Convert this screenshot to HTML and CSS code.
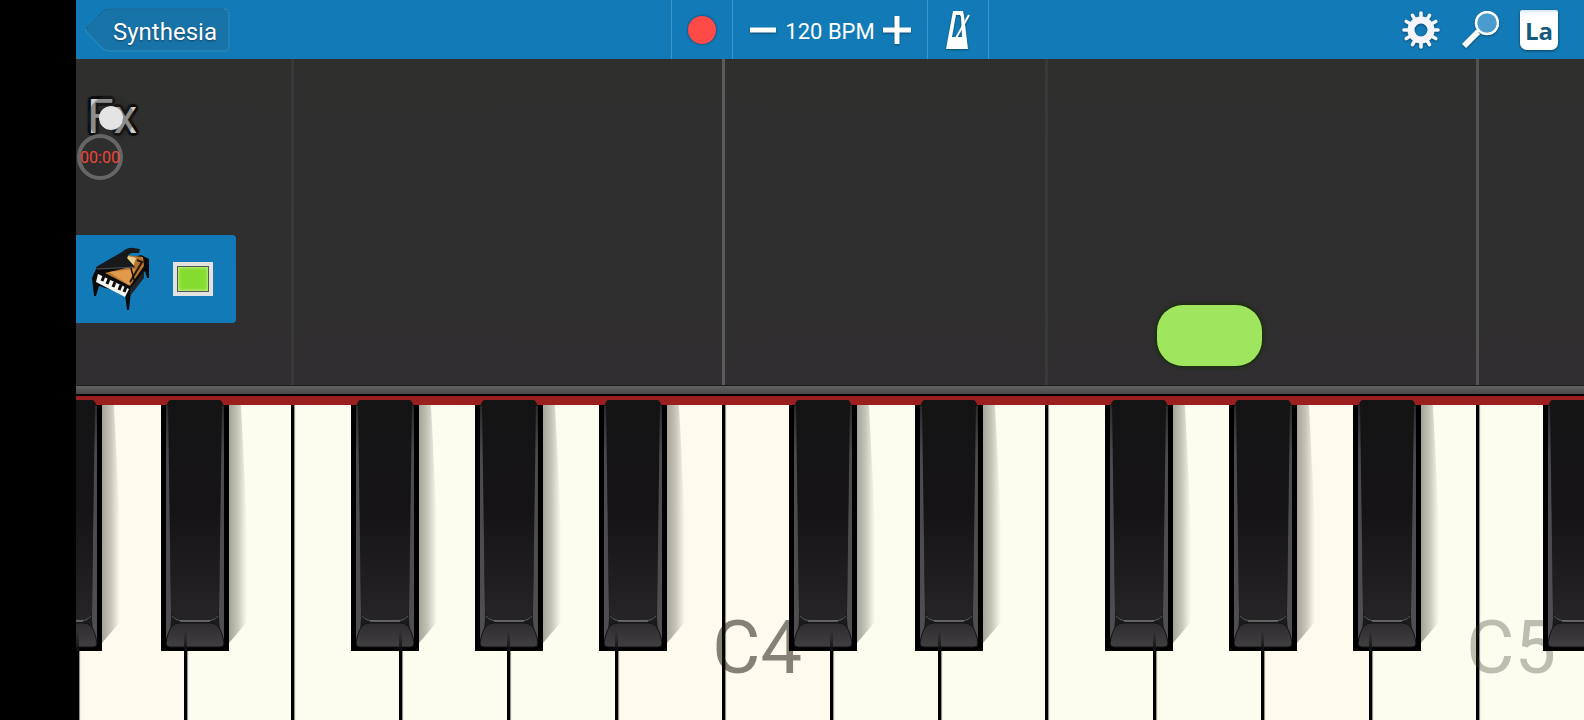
FILE: index.html
```html
<!DOCTYPE html>
<html lang="en">

<head>
    <meta charset="utf-8">
    <title>Synthesia</title>
    <link rel="stylesheet" href="styles.css">
</head>

<body>
    <!-- shared drawing for the black keys -->
    <svg class="defs" aria-hidden="true">
        <defs>
            <linearGradient id="top-fill" x1="0" y1="0" x2="0" y2="1">
                <stop offset="0" stop-color="#151415" />
                <stop offset="0.5" stop-color="#151316" />
                <stop offset="1" stop-color="#262427" />
            </linearGradient>
            <linearGradient id="lip-fill" x1="0" y1="0" x2="0" y2="1">
                <stop offset="0" stop-color="#2e2c2e" />
                <stop offset="1" stop-color="#413f41" />
            </linearGradient>
            <linearGradient id="edge-fill" x1="0" y1="0" x2="0" y2="1">
                <stop offset="0" stop-color="#2b2a2c" />
                <stop offset="0.2" stop-color="#4a494b" />
                <stop offset="1" stop-color="#504e50" />
            </linearGradient>
            <linearGradient id="shade-fill" x1="0" y1="0" x2="1" y2="0">
                <stop offset="0" stop-color="#4a4a40" stop-opacity="0.5" />
                <stop offset="0.5" stop-color="#4a4a40" stop-opacity="0.3" />
                <stop offset="1" stop-color="#4a4a40" stop-opacity="0" />
            </linearGradient>
            <symbol id="black-key" viewBox="0 0 88 251">
                <path d="M68 5h12l6 120v97L68 243z" fill="url(#shade-fill)" />
                <path d="M0 5h68v246H0z" fill="#000" />
                <path d="M5 6l2-4q1-2 3-2h48q2 0 3 2l2 4v237q0 4-4 4H9q-4 0-4-4z" fill="#1b1a1c" />
                <path d="M5 6h3l2 212-1 14-4 8z" fill="url(#edge-fill)" />
                <path d="M60 6h3v234l-4-8-1-14z" fill="url(#edge-fill)" />
                <path d="M7 3q1-3 3-3h48q2 0 3 3l-3 208q-3 10-12 10H22q-9 0-12-10z" fill="url(#top-fill)" />
                <path d="M11 216q4 5 12 5h22q8 0 12-5" fill="none" stroke="#5a595a" />
                <path d="M19 221h30" stroke="#8a898a" />
                <path d="M5 243q2-12 6-17 3-3 8-3h30q5 0 8 3 4 5 6 17 0 4-4 4H9q-4 0-4-4z" fill="url(#lip-fill)" stroke="#131213" />
            </symbol>
        </defs>
    </svg>

    <div class="app">
        <header class="toolbar">
            <div class="left">
                <button class="back">
                    <svg width="146" height="44" viewBox="0 0 146 44">
                        <path d="M1 22L18 4q3-3 7-3h115q5 0 5 5v32q0 5-5 5H25q-4 0-7-3z" fill="#1873a8" stroke="#2f8ec2" />
                        <path d="M2 21L18 4q3-3 7-3h115" fill="none" stroke="#125f8d" />
                    </svg>
                    <span>Synthesia</span>
                </button>
            </div>
            <div class="transport">
                <button class="cell record" aria-label="Record"><i></i></button>
                <div class="cell tempo">
                    <button aria-label="Slower">
                        <svg width="28" height="28"><path d="M1 14h26" stroke="#fff" stroke-width="5" /></svg>
                    </button>
                    <span>120 BPM</span>
                    <button aria-label="Faster">
                        <svg width="28" height="28"><path d="M0 14h28M14 0v28" stroke="#fff" stroke-width="5" /></svg>
                    </button>
                </div>
                <button class="cell metronome" aria-label="Metronome">
                    <svg width="26" height="40" viewBox="0 0 26 40">
                        <path fill-rule="evenodd" d="M8 1h10l1 5 4 33H1zM11 5L7 27h10l-1-20-1-2z" fill="#fff" />
                        <path d="M24 5L11 28" stroke="#fff" stroke-width="2" />
                    </svg>
                </button>
            </div>
            <div class="tools">
                <button aria-label="Settings">
                    <svg width="38" height="38" viewBox="-19 -19 38 38">
                        <circle r="10" fill="none" stroke="#f4f6fb" stroke-width="7" />
                        <g stroke="#f4f6fb" stroke-width="3.6" stroke-linecap="round">
                            <path id="tooth" d="M0-12v-5M0 12v5" />
                            <use href="#tooth" transform="rotate(30)" />
                            <use href="#tooth" transform="rotate(60)" />
                            <use href="#tooth" transform="rotate(90)" />
                            <use href="#tooth" transform="rotate(120)" />
                            <use href="#tooth" transform="rotate(150)" />
                        </g>
                    </svg>
                </button>
                <button aria-label="Zoom">
                    <svg width="38" height="38" viewBox="0 0 38 38">
                        <path d="M3 35l14-14" stroke="#fff" stroke-width="6" />
                        <path d="M15 22l4-5" stroke="#fff" stroke-width="3" />
                        <circle cx="26" cy="12" r="11" fill="#4a9bce" stroke="#fff" stroke-width="2.5" />
                    </svg>
                </button>
                <button class="labels" aria-label="Note labels">La</button>
            </div>
        </header>

        <main class="stage">
            <div class="guides">
                <i class="f3"></i>
                <i class="c4"></i>
                <i class="f4"></i>
                <i class="c5"></i>
            </div>
            <button class="fx">Fx</button>
            <div class="track">
                <button aria-label="Instrument">
                    <svg width="60" height="64" viewBox="0 0 60 64">
                        <path d="M50 8l8 4v19h-2l-2-7-14 20-2 19h-2l-2-16L8 39 5 49H3L1 31l4-9z" fill="#0a0a0b" />
                        <path d="M34 8l18 2 1 9-14 20-25-13 25-6z" fill="#b9762e" />
                        <path d="M37 9l8 2-3 9-8-1z" fill="#e9cf92" />
                        <path d="M18 25l26-3-6 16z" fill="#df9a4c" />
                        <path d="M46 13l5 2-12 20" fill="none" stroke="#2a1708" stroke-width="2" />
                        <path d="M5 20L31 5q6-5 11-4l7 1-1 4-7 0q-4 1-5 5l8 9-38 3z" fill="#18191b" />
                        <path d="M6 22l38-2" stroke="#4c4e52" />
                        <path d="M7 27l31 15-4 8L5 35z" fill="#f5f5f2" />
                        <path d="M13 29l-2 5M18 32l-2 5M24 35l-2 5M30 38l-2 5M35 40l-2 5" stroke="#0a0a0b" stroke-width="3" />
                        <path d="M40 21l4 15" stroke="#0a0a0b" stroke-width="1.5" />
                        <path d="M39 42l14-18v7L39 49z" fill="#222326" />
                    </svg>
                </button>
                <button class="swatch" aria-label="Track colour"><i></i></button>
            </div>
            <i class="note"></i>
        </main>

        <div class="rail"></div>
        <div class="felt"></div>

        <div class="keyboard">
            <div class="key warm split">
                <button class="white" aria-label="D3"></button>
                <button class="black cs cut" aria-label="C#3"><svg><use href="#black-key" /></svg></button>
                <button class="black ds" aria-label="D#3"><svg><use href="#black-key" /></svg></button>
            </div>
            <div class="key split">
                <button class="white" aria-label="E3"></button>
            </div>
            <div class="key">
                <button class="white" aria-label="F3"></button>
                <button class="black fs" aria-label="F#3"><svg><use href="#black-key" /></svg></button>
            </div>
            <div class="key split">
                <button class="white" aria-label="G3"></button>
                <button class="black gs" aria-label="G#3"><svg><use href="#black-key" /></svg></button>
            </div>
            <div class="key split">
                <button class="white" aria-label="A3"></button>
                <button class="black as" aria-label="A#3"><svg><use href="#black-key" /></svg></button>
            </div>
            <div class="key warm split">
                <button class="white" aria-label="B3"></button>
            </div>
            <div class="key warm">
                <button class="white" aria-label="C4"></button>
                <span class="name middle">C4</span>
                <button class="black cs" aria-label="C#4"><svg><use href="#black-key" /></svg></button>
            </div>
            <div class="key split">
                <button class="white" aria-label="D4"></button>
                <button class="black ds" aria-label="D#4"><svg><use href="#black-key" /></svg></button>
            </div>
            <div class="key split">
                <button class="white" aria-label="E4"></button>
            </div>
            <div class="key">
                <button class="white" aria-label="F4"></button>
                <button class="black fs" aria-label="F#4"><svg><use href="#black-key" /></svg></button>
            </div>
            <div class="key split">
                <button class="white" aria-label="G4"></button>
                <button class="black gs" aria-label="G#4"><svg><use href="#black-key" /></svg></button>
            </div>
            <div class="key warm split">
                <button class="white" aria-label="A4"></button>
                <button class="black as" aria-label="A#4"><svg><use href="#black-key" /></svg></button>
            </div>
            <div class="key split">
                <button class="white" aria-label="B4"></button>
            </div>
            <div class="key">
                <button class="white" aria-label="C5"></button>
                <span class="name">C5</span>
                <button class="black cs" aria-label="C#5"><svg><use href="#black-key" /></svg></button>
            </div>
        </div>

        <!-- floating screen recorder -->
        <div class="bubble"></div>
        <div class="timer">00:00</div>
    </div>
</body>

</html>
```
FILE: styles.css
```css
:root {
    --bar: #127bb7;
    --stage: #302e30;
    --ivory: #fcfdee;
    --ivory-warm: #fffaee;
    --felt: #9c1f20;
    --note: #9fe65e;
}

* {
    margin: 0;
    padding: 0;
    box-sizing: border-box;
}

body {
    font-family: Roboto, "Liberation Sans", sans-serif;
    background: #000;
    padding-left: 76px;
    color: #fff;
}

button {
    background: none;
    border: none;
    color: inherit;
    font-family: inherit;
    cursor: pointer;
}

svg {
    display: block;
}

.defs {
    position: absolute;
    width: 0;
    height: 0;
}

.app {
    position: relative;
    min-height: 100vh;
    display: flex;
    flex-direction: column;
    overflow: hidden;
}

/* toolbar */
.toolbar {
    display: grid;
    grid-template-columns: 1fr auto 1fr;
    height: 59px;
    background: var(--bar);
}

.left {
    display: flex;
    align-items: center;
    padding-left: 8px;
}

.back {
    display: grid;
    align-items: center;
    font-size: 24px;
    text-shadow: 0 1px 2px rgba(0, 0, 0, 0.4);
}

.back svg,
.back span {
    grid-area: 1 / 1;
}

.back span {
    padding: 4px 0 0 29px;
    text-align: left;
}

.transport {
    display: flex;
    border-right: 1px solid #3d97c9;
}

.cell {
    display: flex;
    align-items: center;
    justify-content: center;
    width: 61px;
    border-left: 1px solid #3d97c9;
}

.record i {
    width: 28px;
    height: 28px;
    border-radius: 50%;
    background: #ff4a48;
    box-shadow: 0 0 3px rgba(0, 0, 0, 0.5);
}

.tempo {
    width: 195px;
    gap: 8px;
    font-size: 22px;
}

.tempo span {
    padding-top: 4px;
    white-space: nowrap;
}

.tempo svg,
.metronome svg,
.tools svg {
    filter: drop-shadow(0 1px 1px rgba(0, 0, 0, 0.4));
}

.tools {
    display: flex;
    align-items: center;
    justify-content: flex-end;
    gap: 21px;
    padding-right: 26px;
}

.labels {
    width: 38px;
    height: 40px;
    border-radius: 2px 2px 7px 7px;
    background: linear-gradient(#d5e6f1, #fff 4px);
    box-shadow: 0 1px 3px rgba(0, 0, 0, 0.5);
    color: #175b7c;
    font-family: "Open Sans", sans-serif;
    font-size: 24px;
    font-weight: 700;
    line-height: 42px;
}

/* falling notes */
.stage {
    position: relative;
    flex: 1;
    min-height: 326px;
    padding-top: 28px;
    background: linear-gradient(#2f2f2e, var(--stage));
}

.guides {
    position: absolute;
    inset: 0;
    display: grid;
    grid-template-columns: repeat(14, 1fr);
}

.guides i {
    grid-row: 1;
    border-left: 3px solid #3a393a;
}

.f3 {
    grid-column: 3;
}

.guides .c4 {
    grid-column: 7;
    border-color: #5c5b5c;
}

.f4 {
    grid-column: 10;
}

.guides .c5 {
    grid-column: 14;
    border-color: #545354;
}

.fx {
    position: relative;
    display: block;
    margin-left: 11px;
    height: 60px;
    font-size: 48px;
    line-height: 60px;
    color: #d0d0d0;
    text-shadow: 3px 0 1px #0c0c0c, -3px 0 1px #0c0c0c, 0 3px 1px #0c0c0c, 0 -3px 1px #0c0c0c,
        2px 2px 1px #0c0c0c, -2px 2px 1px #0c0c0c, 2px -2px 1px #0c0c0c, -2px -2px 1px #0c0c0c;
}

.track {
    position: relative;
    display: flex;
    align-items: center;
    gap: 22px;
    width: 160px;
    height: 88px;
    margin-top: 88px;
    padding-left: 15px;
    border-radius: 0 4px 4px 0;
    background: var(--bar);
}

.swatch {
    width: 40px;
    height: 34px;
    padding: 4px;
    background: #e2e2e0;
}

.swatch i {
    display: block;
    height: 100%;
    border: 1px solid #555;
    background: #86dc2e;
    box-shadow: inset 0 0 3px 1px #b9ef80;
}

.note {
    position: absolute;
    left: 71.7%;
    bottom: 19px;
    width: 105px;
    height: 61px;
    border-radius: 26px;
    background: var(--note);
    box-shadow: 0 0 3px 2px #1c2e10;
}

.rail {
    height: 11px;
    border-top: 1px solid #1c1c1c;
    border-bottom: 2px solid #000;
    background: linear-gradient(#636263, #4a494a);
}

.felt {
    height: 9px;
    background: var(--felt);
}

/* keyboard */
.keyboard {
    display: grid;
    grid-template-columns: repeat(14, 1fr);
    height: 315px;
}

.key {
    position: relative;
}

.white {
    display: block;
    width: 100%;
    height: 100%;
    border-left: 3px solid #000;
    background: var(--ivory);
    box-shadow: inset 2px 0 1px -1px #8a8a80;
}

.warm .white {
    background: var(--ivory-warm);
}

.black {
    position: absolute;
    z-index: 2;
    top: -5px;
    width: 68px;
    height: 251px;
}

.black svg {
    width: 88px;
    height: 251px;
}

.cs {
    left: 62%;
}

.ds {
    left: 79%;
}

.fs {
    left: 55%;
}

.gs {
    left: 70%;
}

.as {
    left: 86%;
}

.cut {
    left: -39%;
}

/* gap between the white keys reflected in the black key's lip */
.split::before {
    content: "";
    position: absolute;
    z-index: 3;
    top: 225px;
    left: 0;
    width: 3px;
    height: 21px;
    background: linear-gradient(transparent, #111);
}

.name {
    position: absolute;
    z-index: 1;
    left: -10px;
    bottom: 28px;
    font-size: 74px;
    line-height: 88px;
    color: rgba(60, 58, 48, 0.32);
    pointer-events: none;
}

.middle {
    color: rgba(20, 18, 10, 0.52);
}

/* recorder overlay */
.bubble {
    position: absolute;
    z-index: 4;
    top: 95px;
    left: 12px;
    width: 46px;
    height: 46px;
    border: 11px solid rgba(40, 40, 40, 0.4);
    border-radius: 50%;
    background: #e4e4e4;
    background-clip: padding-box;
}

.timer {
    position: absolute;
    z-index: 4;
    top: 134px;
    left: 1px;
    width: 46px;
    height: 46px;
    border: 4px solid #666;
    border-radius: 50%;
    background: rgba(48, 46, 48, 0.8);
    color: #f0463a;
    display: flex;
    align-items: center;
    justify-content: center;
    font-size: 16px;
}
```
